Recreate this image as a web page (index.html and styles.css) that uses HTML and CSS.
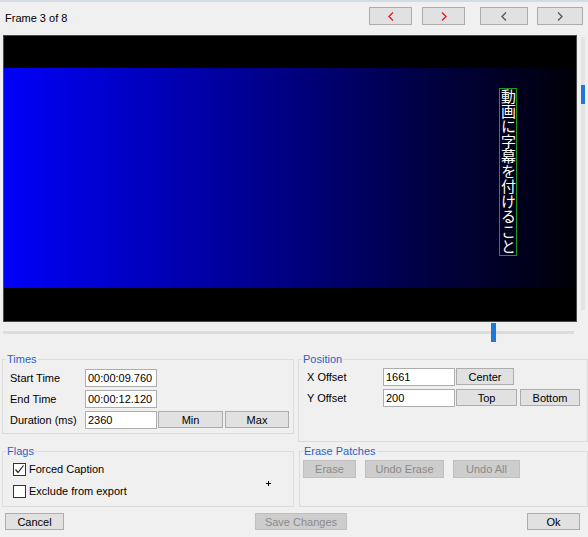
FILE: index.html
```html
<!DOCTYPE html>
<html lang="en">
<head>
  <meta charset="UTF-8" />
  <title>Edit Caption</title>
  <link rel="stylesheet" href="styles.css">
</head>
<body>
  <div class="topline"></div>

  <div class="toolbar">
    <span class="frame-label">Frame 3 of 8</span>
    <div class="nav">
      <button class="btn nav-btn red w42"><svg width="6" height="9" viewBox="0 0 6 9"><polyline points="5,0.5 1,4.5 5,8.5"/></svg></button>
      <button class="btn nav-btn red w42 gap10"><svg width="6" height="9" viewBox="0 0 6 9"><polyline points="1,0.5 5,4.5 1,8.5"/></svg></button>
      <button class="btn nav-btn grey w48 gap15"><svg width="6" height="9" viewBox="0 0 6 9"><polyline points="5,0.5 1,4.5 5,8.5"/></svg></button>
      <button class="btn nav-btn grey w46 gap9"><svg width="6" height="9" viewBox="0 0 6 9"><polyline points="1,0.5 5,4.5 1,8.5"/></svg></button>
    </div>
  </div>

  <div class="viewer">
    <div class="video">
      <div class="band top"></div>
      <div class="picture">
        <div class="caption">動画に字幕を付けること</div>
      </div>
      <div class="band"></div>
    </div>
    <div class="vscroll"><div class="vthumb"></div></div>
  </div>

  <div class="slider">
    <div class="track"></div>
    <div class="thumb" style="left: 491px;"></div>
  </div>

  <div class="groups row-one">
    <fieldset class="group times">
      <legend>Times</legend>
      <div class="row">
        <label class="lbl">Start Time</label>
        <input class="field" type="text" value="00:00:09.760">
      </div>
      <div class="row">
        <label class="lbl">End Time</label>
        <input class="field" type="text" value="00:00:12.120">
      </div>
      <div class="row">
        <label class="lbl">Duration (ms)</label>
        <input class="field" type="text" value="2360">
        <button class="btn small min-btn">Min</button>
        <button class="btn small max-btn">Max</button>
      </div>
    </fieldset>

    <fieldset class="group position">
      <legend>Position</legend>
      <div class="row">
        <label class="lbl">X Offset</label>
        <input class="field" type="text" value="1661">
        <button class="btn small center-btn">Center</button>
      </div>
      <div class="row">
        <label class="lbl">Y Offset</label>
        <input class="field" type="text" value="200">
        <button class="btn small top-btn">Top</button>
        <button class="btn small bottom-btn">Bottom</button>
      </div>
    </fieldset>
  </div>

  <div class="groups row-two">
    <fieldset class="group flags">
      <legend>Flags</legend>
      <div class="check-row">
        <span class="checkbox"><svg width="11" height="11" viewBox="0 0 11 11"><polyline points="1.5,5.5 4,8.5 9.5,1.5"/></svg></span>
        <span>Forced Caption</span>
      </div>
      <div class="check-row">
        <span class="checkbox"></span>
        <span>Exclude from export</span>
      </div>
      <span class="cursor"></span>
    </fieldset>

    <fieldset class="group erase">
      <legend>Erase Patches</legend>
      <div class="erase-row">
        <button class="btn disabled erase-btn">Erase</button>
        <button class="btn disabled undo-btn">Undo Erase</button>
        <button class="btn disabled undo-all-btn">Undo All</button>
      </div>
    </fieldset>
  </div>

  <div class="footer">
    <button class="btn foot cancel-btn">Cancel</button>
    <button class="btn foot disabled save-btn">Save Changes</button>
    <button class="btn foot ok-btn">Ok</button>
  </div>
</body>
</html>
```

FILE: styles.css
```css
body {
  margin: 0;
  width: 588px;
  height: 537px;
  overflow: hidden;
  background: #f0f0f0;
  font-family: 'Liberation Sans', Arial, sans-serif;
  font-size: 11px;
  color: #000;
}
.topline {
  height: 2px;
  background: #d3dbe6;
}

/* toolbar */
.toolbar {
  height: 33px;
  display: flex;
  align-items: flex-start;
}
.frame-label {
  margin: 10px 0 0 5px;
}
.nav {
  display: flex;
  margin: 5px 0 0 auto;
  padding-right: 5px;
}
.btn {
  background: #e1e1e1;
  border: 1px solid #adadad;
  font-family: inherit;
  font-size: 11px;
  color: #000;
  padding: 0;
  box-sizing: border-box;
}
.nav-btn {
  height: 18px;
  display: flex;
  align-items: center;
  justify-content: center;
}
.nav-btn svg polyline {
  fill: none;
  stroke-width: 1.3;
}
.red svg polyline { stroke: #e0161b; }
.grey svg polyline { stroke: #555; }
.w42 { width: 43px; }
.w48 { width: 48px; }
.w46 { width: 46px; }
.gap10 { margin-left: 10px; }
.gap15 { margin-left: 15px; }
.gap9 { margin-left: 9px; }

/* video */
.viewer {
  display: flex;
  height: 287px;
}
.video {
  width: 574px;
  height: 287px;
  margin-left: 3px;
  box-sizing: border-box;
  border: 1px solid #4a4a4a;
  background: #000;
  display: flex;
  flex-direction: column;
}
.band {
  flex: 1;
  background: #000;
}
.band.top {
  flex: 0 0 32px;
}
.picture {
  position: relative;
  height: 220px;
  background: linear-gradient(90deg, #0000fa, #00009a 40%, #000040 75%, #000008);
}
.caption {
  position: absolute;
  left: 495px;
  top: 20px;
  width: 16px;
  height: 166px;
  border: 1px solid #1c9a1c;
  writing-mode: vertical-rl;
  font-family: 'Noto Sans CJK JP', sans-serif;
  font-size: 15px;
  line-height: 16px;
  color: #fff;
  text-shadow: 0 0 1px #000, 0 0 1px #000;
  white-space: nowrap;
}
.vscroll {
  width: 4px;
  height: 273px;
  margin: 2px 0 0 4px;
  background: #e4e4e4;
  position: relative;
}
.vthumb {
  position: absolute;
  top: 48px;
  left: 0;
  width: 4px;
  height: 19px;
  background: #1e78d4;
}

/* slider */
.slider {
  position: relative;
  height: 31px;
  padding-top: 9px;
  box-sizing: border-box;
}
.track {
  margin-left: 3px;
  width: 571px;
  height: 3px;
  background: #dcdcdc;
}
.thumb {
  position: absolute;
  top: 1px;
  width: 5px;
  height: 19px;
  background: #1e78d4;
}

/* group boxes */
.groups {
  display: flex;
  align-items: flex-start;
}
.row-two {
  margin-top: 3px;
}
.group {
  margin: 0;
  padding: 0 0 0 3px;
  min-width: 0;
  border: 1px solid #dcdcdc;
  box-sizing: border-box;
  position: relative;
}
.group legend {
  padding: 0 1px;
  font-size: 11px;
  line-height: 13px;
  color: #2f5fc4;
}
.times {
  width: 294px;
  height: 81px;
  margin-left: 2px;
  padding-top: 3px;
}
.times .row { margin-left: 4px; }
.position {
  width: 292px;
  height: 89px;
  margin-left: 4px;
  padding-top: 2px;
}
.position .row { margin-left: 5px; }
.flags {
  width: 294px;
  height: 62px;
  margin-left: 2px;
  padding-top: 2px;
}
.flags .check-row { margin-left: 7px; }
.erase {
  width: 291px;
  height: 62px;
  margin-left: 5px;
  padding-top: 2px;
}
.row {
  display: flex;
  align-items: flex-start;
  height: 18px;
  margin-bottom: 3px;
}
.lbl {
  width: 75px;
  line-height: 18px;
}
.position .lbl {
  width: 76px;
}
.field {
  width: 72px;
  height: 18px;
  box-sizing: border-box;
  border: 1px solid #adadad;
  background: #fff;
  font-family: inherit;
  font-size: 11px;
  padding: 0 2px;
  margin: 0;
}
.small {
  height: 17px;
}
.min-btn { width: 65px; margin-left: 1px; }
.max-btn { width: 64px; margin-left: 2px; }
.center-btn { width: 58px; margin-left: 1px; }
.top-btn { width: 61px; margin-left: 1px; }
.bottom-btn { width: 60px; margin-left: 3px; }

.check-row {
  display: flex;
  align-items: center;
  height: 18px;
  margin-bottom: 4px;
}
.checkbox {
  width: 13px;
  height: 13px;
  box-sizing: border-box;
  border: 1px solid #333;
  background: #fff;
  margin-right: 3px;
  display: flex;
  align-items: center;
  justify-content: center;
}
.checkbox polyline {
  fill: none;
  stroke: #222;
  stroke-width: 1.2;
}
.cursor {
  position: absolute;
  left: 263px;
  top: 23px;
  width: 5px;
  height: 5px;
  background:
    linear-gradient(#000, #000) center / 5px 1px no-repeat,
    linear-gradient(#000, #000) center / 1px 5px no-repeat;
}
.erase-row {
  display: flex;
}
.disabled {
  background: #cdcdcd;
  border-color: #bfbfbf;
  color: #8a8a8a;
}
.erase-row .btn {
  height: 18px;
}
.erase-btn { width: 53px; }
.undo-btn { width: 79px; margin-left: 9px; }
.undo-all-btn { width: 67px; margin-left: 9px; }

/* footer */
.footer {
  display: flex;
  margin-top: 6px;
  padding: 0 8px 0 5px;
}
.foot {
  height: 17px;
}
.cancel-btn { width: 59px; }
.save-btn { width: 92px; margin-left: 191px; }
.ok-btn { width: 53px; margin-left: auto; }
```
